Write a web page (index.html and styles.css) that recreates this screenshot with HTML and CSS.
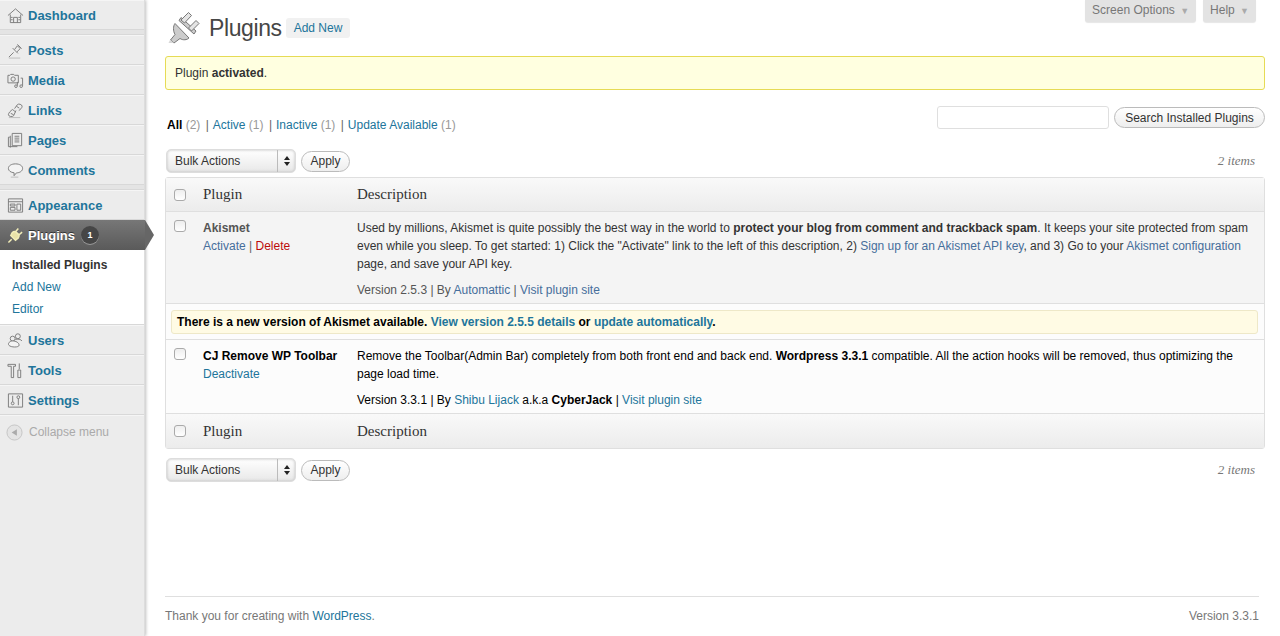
FILE: index.html
```html
<!DOCTYPE html>
<html lang="en">
<head>
    <meta charset="UTF-8">
    <title>Plugins</title>
    <link rel="stylesheet" href="styles.css">
</head>
<body>
    <div class="layout">
        <nav class="sidebar">
            <a class="menu-item first" href="#">
                <svg class="menu-icon" viewBox="0 0 18 18"><path d="M1 9 9 2l8 7M3.5 8v8.500h11V8M7 16.500V11h4v5.500M4 11h2M12 11h2M4 13.500h2M12 13.500h2" /></svg>
                Dashboard
            </a>
            <div class="menu-sep"></div>
            <a class="menu-item" href="#">
                <svg class="menu-icon" viewBox="0 0 18 18"><path d="M2 16 7 11M6 6.500l5.500 5.500M8 8l3-4 3 3-3.500 3.500M11 2.500 15.500 7" /><path class="shade" d="M2 17h12" /></svg>
                Posts
            </a>
            <a class="menu-item" href="#">
                <svg class="menu-icon" viewBox="0 0 18 18"><path d="M1 3.500h2l1-1h3l1 1h4v8H1z" /><circle cx="6.500" cy="7.500" r="2.300" /><path d="M14.500 6.500h2v8M11 10.500v4" /><circle cx="9.500" cy="15" r="1.400" /><circle cx="15" cy="15" r="1.400" /></svg>
                Media
            </a>
            <a class="menu-item" href="#">
                <svg class="menu-icon" viewBox="0 0 18 18"><path d="m8 7 3-4.200c1-1.300 5-.3 5 1.700 0 2-2 3.500-3.500 4.500M10 4.500l3 2" /><path d="M9.500 9 7 14.500c-1 1.600-5.500 1-5.500-1 0-2 2.500-4.500 4.500-5.500l3 2.500M4 12l3 1.500" /><path class="shade" d="M2 16.500h12" /></svg>
                Links
            </a>
            <a class="menu-item" href="#">
                <svg class="menu-icon" viewBox="0 0 18 18"><path d="M3 5.500H1.500v10H11" /><path d="M5.500 1.500h10v13h-10zM8 4.500h5M8 6.500h5M8 8.500h5M8 10.500h5" /><path d="M3.500 4v12.500" /></svg>
                Pages
            </a>
            <a class="menu-item" href="#">
                <svg class="menu-icon" viewBox="0 0 18 18"><path class="filled" d="M9 2c4.500 0 7.500 2 7.500 4.800S13.500 11.500 10 11.500l-2.500 3V11.400C4 11 1.500 9.500 1.500 6.800 1.500 4 4.500 2 9 2z" /><path class="shade" d="M4 16h8" /></svg>
                Comments
            </a>
            <div class="menu-sep"></div>
            <a class="menu-item" href="#">
                <svg class="menu-icon" viewBox="0 0 18 18"><path d="M1.500 2h15v14h-15zM1.500 5h15M3.500 7.500h5v2h-5zM3.500 11h5v3h-5zM10.500 7.500h4v6.500h-4z" /></svg>
                Appearance
            </a>
            <a class="menu-item active" href="#">
                <svg class="menu-icon plug-light" viewBox="0 0 18 18"><path d="M1.500 16.500 5 13M4 9l5 5 3-2.500c1-1 1-2.500.5-3.500L9 5C8 4.500 6.500 5 5.500 6z" /><path d="m9 5 3-3.500M12.500 8.500 16 5.500" /></svg>
                Plugins
                <span class="badge">1</span>
            </a>
            <div class="submenu">
                <a class="current" href="#">Installed Plugins</a>
                <a href="#">Add New</a>
                <a href="#">Editor</a>
            </div>
            <a class="menu-item" href="#">
                <svg class="menu-icon" viewBox="0 0 18 18"><circle cx="6" cy="7" r="2.600" /><circle cx="11.500" cy="4.500" r="2.600" /><path d="M8.800 7.800c2.500-.5 6-.3 7 1.700" /><path class="filled" d="M2 14c-1.500-2 1-4.500 4-4.500s6.800 1.500 6.800 4.500c0 2.500-8.800 2.500-10.800 0z" /></svg>
                Users
            </a>
            <a class="menu-item" href="#">
                <svg class="menu-icon" viewBox="0 0 18 18"><path d="M1 2.500h8V4.500H7v12H4.500v-12H1zM13 1.500v6M11.500 8.500h3v8h-3z" /></svg>
                Tools
            </a>
            <a class="menu-item" href="#">
                <svg class="menu-icon" viewBox="0 0 18 18"><path d="M1.500 2h15v14h-15z" /><circle cx="6" cy="12" r="1.500" /><circle cx="12" cy="5.500" r="1.500" /><path d="M6 4v6.500M12 7v7" /></svg>
                Settings
            </a>
            <a class="collapse" href="#">
                <svg class="collapse-icon" viewBox="0 0 18 18"><circle cx="9" cy="9" r="8" /><path d="M11.500 5.500v7L6 9z" /></svg>
                Collapse menu
            </a>
        </nav>

        <main class="content">
            <div class="header">
                <div class="title-row">
                    <svg class="title-icon" viewBox="0 0 34 34"><path class="plug-body" d="M8 12.500 22 27c-2 2-6 2.500-9 .5L7 32 3.500 29l4.500-5.500C6 20 6 15 8 12.500z" /><path class="plug-body" d="M12 9.500 27 23l2-3-15-13.500z" /><path class="plug-pin" d="M14 9 21.500 1.500l3 3L17.500 12zM21.500 17 29 9.500l3 3-7.500 7.500z" /><path class="plug-foot" d="M7 32H1.500L3 29z" /></svg>
                    <h2>Plugins</h2>
                    <a class="add-new" href="#">Add New</a>
                </div>
                <div class="screen-meta">
                    <a href="#">Screen Options <span class="down">▼</span></a>
                    <a href="#">Help <span class="down">▼</span></a>
                </div>
            </div>

            <div class="notice">Plugin <strong>activated</strong>.</div>

            <div class="filter-row">
                <ul class="filters">
                    <li><a class="current" href="#">All</a> <span class="count">(2)</span> <span class="bar">|</span></li>
                    <li><a href="#">Active</a> <span class="count">(1)</span> <span class="bar">|</span></li>
                    <li><a href="#">Inactive</a> <span class="count">(1)</span> <span class="bar">|</span></li>
                    <li><a href="#">Update Available</a> <span class="count">(1)</span></li>
                </ul>
                <div class="search">
                    <input type="text" class="search-input">
                    <button class="btn btn-search">Search Installed Plugins</button>
                </div>
            </div>

            <div class="tablenav">
                <div class="bulk">
                    <div class="fake-select">
                        <span class="fake-label">Bulk Actions</span>
                        <span class="fake-arrows"><i class="up"></i><i class="dn"></i></span>
                    </div>
                    <button class="btn btn-apply">Apply</button>
                </div>
                <span class="items">2 items</span>
            </div>

            <table class="plugins">
                <thead>
                    <tr>
                        <th class="col-check"><span class="check"></span></th>
                        <th class="col-name">Plugin</th>
                        <th>Description</th>
                    </tr>
                </thead>
                <tbody>
                    <tr class="inactive">
                        <td class="col-check"><span class="check"></span></td>
                        <td class="col-name">
                            <strong>Akismet</strong>
                            <div class="row-actions"><a href="#">Activate</a> | <a class="del" href="#">Delete</a></div>
                        </td>
                        <td class="desc">
                            <p>Used by millions, Akismet is quite possibly the best way in the world to <strong>protect your blog from comment and trackback spam</strong>. It keeps your site protected from spam even while you sleep. To get started: 1) Click the "Activate" link to the left of this description, 2) <a href="#">Sign up for an Akismet API key</a>, and 3) Go to your <a href="#">Akismet configuration</a> page, and save your API key.</p>
                            <div class="meta">Version 2.5.3 | By <a href="#">Automattic</a> | <a href="#">Visit plugin site</a></div>
                        </td>
                    </tr>
                    <tr class="update-row">
                        <td colspan="3">
                            <div class="update-msg">There is a new version of Akismet available. <a href="#">View version 2.5.5 details</a> or <a href="#">update automatically</a>.</div>
                        </td>
                    </tr>
                    <tr class="active-row">
                        <td class="col-check"><span class="check"></span></td>
                        <td class="col-name">
                            <strong>CJ Remove WP Toolbar</strong>
                            <div class="row-actions"><a href="#">Deactivate</a></div>
                        </td>
                        <td class="desc">
                            <p>Remove the Toolbar(Admin Bar) completely from both front end and back end. <strong>Wordpress 3.3.1</strong> compatible. All the action hooks will be removed, thus optimizing the page load time.</p>
                            <div class="meta">Version 3.3.1 | By <a href="#">Shibu Lijack</a> a.k.a <strong>CyberJack</strong> | <a href="#">Visit plugin site</a></div>
                        </td>
                    </tr>
                </tbody>
                <tfoot>
                    <tr>
                        <th class="col-check"><span class="check"></span></th>
                        <th class="col-name">Plugin</th>
                        <th>Description</th>
                    </tr>
                </tfoot>
            </table>

            <div class="tablenav bottom">
                <div class="bulk">
                    <div class="fake-select">
                        <span class="fake-label">Bulk Actions</span>
                        <span class="fake-arrows"><i class="up"></i><i class="dn"></i></span>
                    </div>
                    <button class="btn btn-apply">Apply</button>
                </div>
                <span class="items">2 items</span>
            </div>

            <div class="footer">
                <span>Thank you for creating with <a href="#">WordPress</a>.</span>
                <span>Version 3.3.1</span>
            </div>
        </main>
    </div>
</body>
</html>
```

FILE: styles.css
```css
* {
    box-sizing: border-box;
}

html, body {
    margin: 0;
    height: 636px;
    overflow: hidden;
}

body {
    font-family: "Liberation Sans", Arial, sans-serif;
    font-size: 12px;
    color: #333;
    background: #fff;
}

a {
    color: #21759b;
    text-decoration: none;
}

.layout {
    display: flex;
    height: 636px;
}

/* sidebar */
.sidebar {
    width: 145px;
    flex-shrink: 0;
    background: #ececec;
    box-shadow: 1px 0 3px rgba(0,0,0,0.25);
    border-right: 1px solid #ddd;
}

.menu-item {
    display: flex;
    align-items: center;
    position: relative;
    height: 30px;
    padding-left: 7px;
    font-size: 13px;
    font-weight: bold;
    color: #21759b;
    border-top: 1px solid #f5f5f5;
    border-bottom: 1px solid #d8d8d8;
}

.menu-item.first {
    height: 30px;
    margin-top: 0;
}

.menu-sep {
    height: 5px;
    background: #e4e4e4;
    border-bottom: 1px solid #d8d8d8;
}

.menu-icon {
    width: 17px;
    height: 17px;
    margin-right: 4px;
    flex-shrink: 0;
    fill: none;
    stroke: #7a7a7a;
    stroke-width: 1;
}

.menu-icon .shade {
    stroke: #bbb;
}

.menu-icon .filled {
    fill: #f4f4f4;
}

.menu-item.active {
    height: 30px;
    color: #fff;
    background: linear-gradient(#777, #5a5a5a);
    border: none;
    text-shadow: 0 -1px 0 #333;
    width: 145px;
}

.menu-item.active::after {
    content: "";
    position: absolute;
    left: 145px;
    top: 0;
    border-left: 9px solid #666;
    border-top: 15px solid transparent;
    border-bottom: 15px solid transparent;
}

.plug-light {
    stroke: #f2edb8;
    stroke-width: 1.6;
    fill: #e9e2a8;
}

.badge {
    width: 18px;
    height: 18px;
    margin-left: 6px;
    border-radius: 50%;
    background: #464646;
    box-shadow: 0 1px 0 #999;
    color: #fff;
    font-size: 9px;
    line-height: 18px;
    text-align: center;
    text-shadow: none;
}

.submenu {
    display: flex;
    flex-direction: column;
    height: 75px;
    padding-top: 4px;
    background: #fff;
    border-bottom: 1px solid #d8d8d8;
    width: 144px;
}

.submenu a {
    height: 22px;
    line-height: 22px;
    padding-left: 12px;
}

.submenu .current {
    color: #333;
    font-weight: bold;
}

.collapse {
    display: flex;
    align-items: center;
    height: 33px;
    padding-left: 6px;
    color: #aaa;
    border-top: 1px solid #f5f5f5;
}

.collapse-icon {
    width: 17px;
    height: 17px;
    margin-right: 6px;
    fill: #e4e4e4;
    stroke: #c4c4c4;
}

.collapse-icon path {
    fill: #aaa;
    stroke: none;
}

/* main column */
.content {
    flex: 1;
    display: flex;
    flex-direction: column;
    padding: 0 15px 0 20px;
}

.header {
    display: flex;
    justify-content: space-between;
    align-items: flex-start;
    height: 56px;
}

.title-row {
    display: flex;
    align-items: center;
    padding-top: 12px;
    height: 44px;
    margin-left: 2px;
}

.title-icon {
    width: 34px;
    height: 34px;
    margin-right: 8px;
}

.plug-body {
    fill: #ccc;
    stroke: #777;
}

.plug-pin {
    fill: #e4e4e4;
    stroke: #777;
}

.plug-foot {
    fill: #d8d8d8;
}

h2 {
    margin: 0 4px 0 0;
    font-size: 23px;
    font-weight: normal;
    color: #464646;
    letter-spacing: -0.4px;
}

.add-new {
    height: 20px;
    line-height: 20px;
    padding: 0 8px;
    background: #f1f1f1;
    border-radius: 3px;
}

.screen-meta {
    display: flex;
    gap: 7px;
    margin-right: 9px;
}

.screen-meta a {
    height: 22px;
    line-height: 21px;
    padding: 0 7px;
    color: #777;
    background: #e3e3e3;
    border-radius: 0 0 3px 3px;
    box-shadow: 0 1px 1px rgba(0,0,0,0.1);
}

.down {
    font-size: 9px;
    color: #aaa;
    margin-left: 2px;
}

.notice {
    height: 34px;
    line-height: 32px;
    padding-left: 9px;
    color: #333;
    background: #ffffe0;
    border: 1px solid #e6db55;
    border-radius: 3px;
}

.filter-row {
    display: flex;
    justify-content: space-between;
    height: 55px;
    padding-top: 16px;
}

.filters {
    display: flex;
    list-style: none;
    margin: 11px 0 0 2px;
    padding: 0;
    line-height: 16px;
    gap: 4px;
}

.filters .current {
    color: #000;
    font-weight: bold;
}

.count {
    color: #999;
}

.bar {
    color: #666;
    margin-left: 2px;
}

.search {
    display: flex;
    align-items: flex-start;
    gap: 5px;
}

.search-input {
    width: 172px;
    height: 23px;
    background: #fff;
    border: 1px solid #dfdfdf;
    border-radius: 3px;
}

.btn {
    height: 21px;
    font-family: inherit;
    font-size: 12px;
    color: #333;
    background: linear-gradient(#fff, #eee);
    border: 1px solid #bbb;
    border-radius: 11px;
    padding: 0 8px;
    cursor: pointer;
}

.btn-search {
    width: 151px;
    margin-top: 1px;
}

.tablenav {
    display: flex;
    justify-content: space-between;
    align-items: center;
    height: 32px;
    padding-right: 10px;
}

.tablenav.bottom {
    margin-top: 4px;
    height: 34px;
}

.bulk {
    display: flex;
    align-items: center;
    gap: 5px;
    margin-left: 1px;
}

.fake-select {
    display: flex;
    width: 130px;
    height: 24px;
    line-height: 22px;
    background: linear-gradient(#fff, #e8e8e8);
    border: 1px solid #ddd;
    border-radius: 5px;
    box-shadow: inset 0 0 3px #bbb;
    color: #333;
}

.fake-label {
    flex: 1;
    padding-left: 8px;
}

.fake-arrows {
    display: flex;
    flex-direction: column;
    justify-content: center;
    align-items: center;
    gap: 2px;
    width: 18px;
    border-left: 1px solid #bbb;
}

.up, .dn {
    width: 0;
    height: 0;
    border-left: 3px solid transparent;
    border-right: 3px solid transparent;
}

.up {
    border-bottom: 4px solid #222;
}

.dn {
    border-top: 4px solid #222;
}

.btn-apply {
    width: 49px;
}

.items {
    font-family: "Liberation Serif", "DejaVu Serif", serif;
    font-style: italic;
    font-size: 13px;
    color: #777;
}

/* table */
.plugins {
    width: 100%;
    border-collapse: separate;
    border-spacing: 0;
    border: 1px solid #dfdfdf;
    border-radius: 3px;
    table-layout: fixed;
}

.col-check {
    width: 30px;
}

.col-name {
    width: 154px;
}

.plugins th {
    height: 34px;
    padding: 0 7px;
    text-align: left;
    font-family: "Liberation Serif", "DejaVu Serif", serif;
    font-weight: normal;
    font-size: 15px;
    color: #333;
    background: linear-gradient(#f9f9f9, #ececec);
}

.plugins thead th {
    border-bottom: 1px solid #dfdfdf;
}

.plugins th.col-check, .plugins td.col-check {
    padding: 0 0 0 8px;
}

.plugins td {
    vertical-align: top;
    padding: 7px 7px 0;
    line-height: 18px;
}

.plugins td.col-check {
    padding-top: 8px;
}

.check {
    display: block;
    width: 12px;
    height: 12px;
    background: linear-gradient(#eee, #fff);
    border: 1px solid #aaa;
    border-radius: 3px;
}

.inactive td {
    height: 92px;
    background: #f4f4f4;
    border-bottom: 1px solid #dfdfdf;
    color: #333;
}

.inactive .col-name strong {
    color: #555;
}

.inactive .row-actions a, .inactive .desc a {
    color: #466e9b;
}

.inactive .row-actions .del {
    color: #bc0b0b;
}

.inactive .meta {
    color: #555;
}

.active-row td {
    height: 74px;
    background: #fcfcfc;
    border-bottom: 1px solid #dfdfdf;
    color: #000;
}

.row-actions {
    color: #666;
}

.desc p {
    margin: 0 0 8px;
}

.update-row td {
    height: 36px;
    padding: 6px 6px 0 5px;
    background: #fcfcfc;
    border-bottom: 1px solid #dfdfdf;
}

.update-msg {
    height: 24px;
    line-height: 22px;
    padding-left: 5px;
    font-weight: bold;
    color: #000;
    background: #fffbe4;
    border: 1px solid #eee8c8;
    border-radius: 3px;
}

.footer {
    display: flex;
    justify-content: space-between;
    margin-top: auto;
    margin-bottom: 0;
    margin-right: 6px;
    height: 40px;
    line-height: 39px;
    color: #777;
    border-top: 1px solid #dfdfdf;
}
```
